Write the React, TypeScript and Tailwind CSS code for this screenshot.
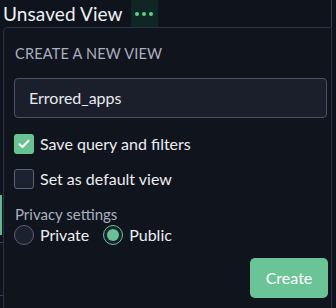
import React from "react";

export default function App() {
  return (
    <div
      className="relative w-[336px] h-[308px] bg-[#0f131b] overflow-hidden"
      style={{ fontFamily: "Lato, 'Noto Sans', sans-serif" }}
    >
      {/* background bits */}
      <div className="absolute left-0 top-[195px] w-[2px] h-[40px] bg-[#5fb98c]" />
      <div className="absolute left-0 top-[242px] w-[3px] h-px bg-[#3a4050]" />
      <div className="absolute left-0 top-[295px] w-[3px] h-px bg-[#3a4050]" />
      <div className="absolute left-[331px] top-0 w-px h-[27px] bg-[#3a4152]" />

      {/* header */}
      <div className="flex items-center h-[27px]">
        <span className="pl-[3px] text-[19px] leading-none text-[#eef0f4] tracking-[0.1px]">Unsaved View</span>
        <div className="ml-[8px] w-[27px] h-[27px] bg-[#0f2622] flex items-center justify-center gap-[3px]">
          <span className="w-[4px] h-[4px] rounded-full bg-[#5fcf95]" />
          <span className="w-[4px] h-[4px] rounded-full bg-[#5fcf95]" />
          <span className="w-[4px] h-[4px] rounded-full bg-[#5fcf95]" />
        </div>
      </div>

      {/* popover */}
      <div className="absolute left-[3px] top-[27px] w-[329px] h-[300px] border border-[#2a3142] rounded-tl-[4px] bg-[#10141d] pl-[10px] pr-[3px]">
        <div className="pt-[16px] text-[14.5px] leading-[20px] text-[#a9b0be] tracking-[0.2px] pl-[1px]">CREATE A NEW VIEW</div>
        <div className="mt-[14px] w-[313px] h-[40px] rounded-[4px] border border-[#4b5264] bg-[#1a1f2b] flex items-center pl-[14px] text-[16px] text-[#e8eaef]">
          Errored_apps
        </div>
        <div className="mt-[16px] flex items-center gap-[6px] h-[20px]">
          <div className="w-[20px] h-[20px] rounded-[3px] bg-[#68c293] flex items-center justify-center">
            <svg width="12" height="10" viewBox="0 0 12 10" fill="none">
              <path d="M1.5 5.2 L4.5 8 L10.5 1.8" stroke="white" strokeWidth="2" strokeLinecap="round" strokeLinejoin="round" />
            </svg>
          </div>
          <span className="text-[16px] text-[#eceef2]">Save query and filters</span>
        </div>
        <div className="mt-[15px] flex items-center gap-[6px] h-[20px]">
          <div className="w-[20px] h-[20px] rounded-[3px] border border-[#5a6175] bg-[#1c2130]" />
          <span className="text-[16px] text-[#eceef2]">Set as default view</span>
        </div>
        <div className="mt-[15px] text-[15px] leading-[20px] text-[#a9b0be] pl-[1px]">Privacy settings</div>
        <div className="mt-[1px] flex items-center h-[20px]">
          <div className="w-[20px] h-[20px] rounded-full border border-[#5a6175] bg-[#1c2130]" />
          <span className="ml-[6px] text-[16px] text-[#eceef2]">Private</span>
          <div className="ml-[14px] w-[20px] h-[20px] rounded-full border border-[#68c293] bg-[#1c2130] flex items-center justify-center">
            <div className="w-[12px] h-[12px] rounded-full bg-[#68c293]" />
          </div>
          <span className="ml-[6px] text-[16px] text-[#eceef2]">Public</span>
        </div>
        <div className="mt-[13px] flex justify-end">
          <button className="w-[78px] h-[40px] rounded-[5px] bg-[#6bc497] text-white text-[16px]">Create</button>
        </div>
      </div>
    </div>
  );
}
